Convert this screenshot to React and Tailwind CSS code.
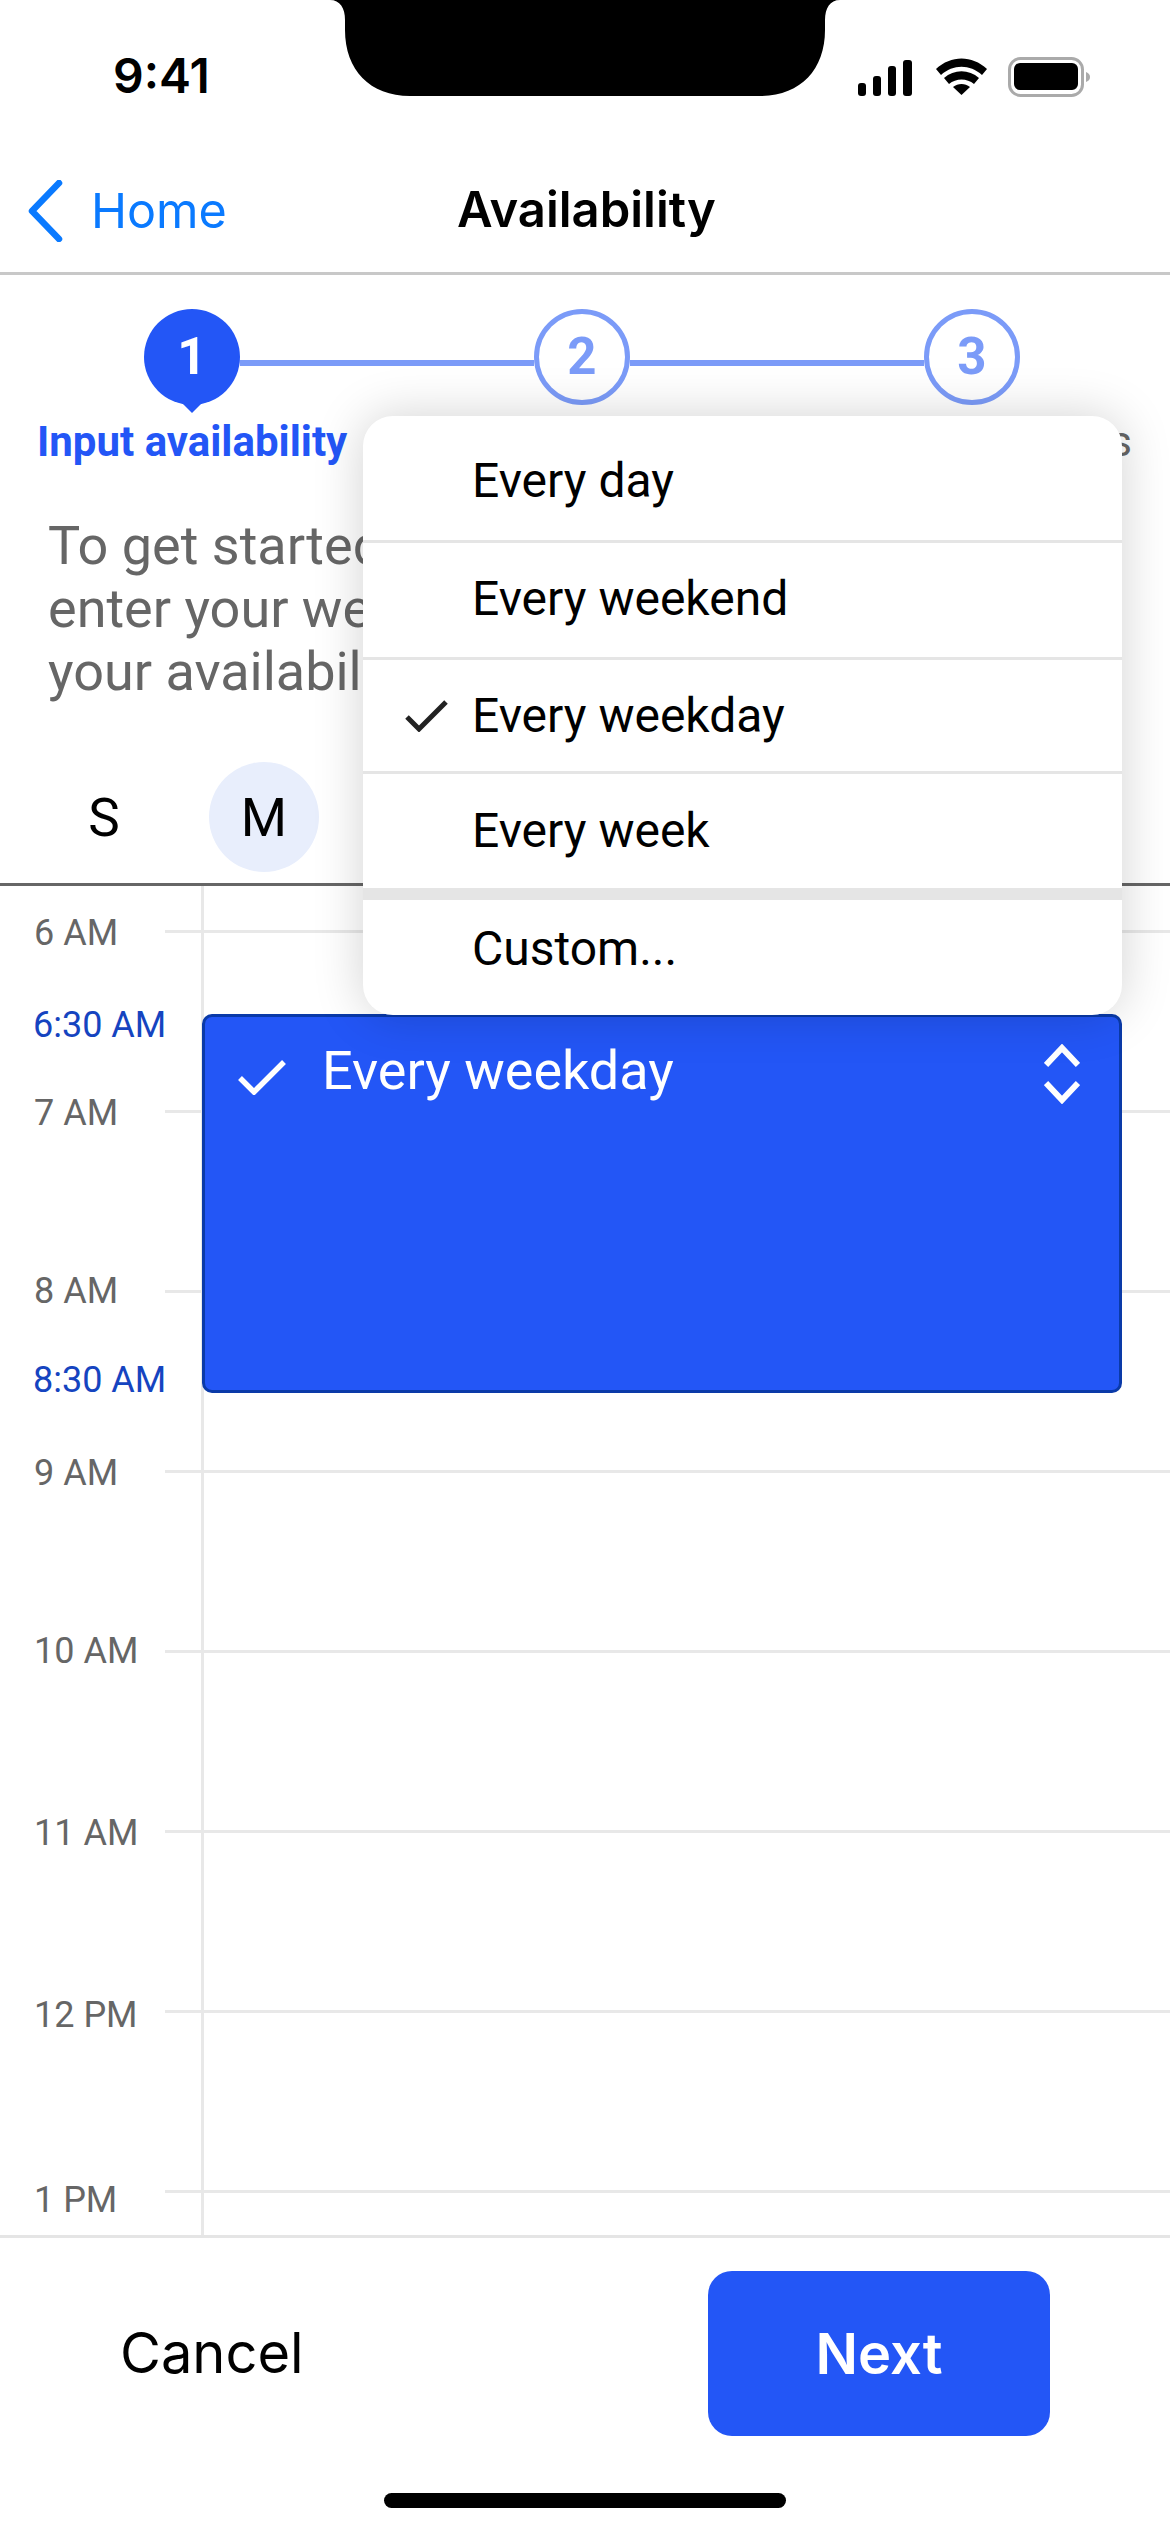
const hours = [
  { t: '6 AM', cls: '-mt-[17px]' },
  { t: '7 AM', cls: '-mt-[17px]' },
  { t: '8 AM', cls: '-mt-[19px]' },
  { t: '9 AM', cls: '-mt-[17px]' },
  { t: '10 AM', cls: '-mt-[19px]' },
  { t: '11 AM', cls: '-mt-[17px]' },
  { t: '12 PM', cls: '-mt-[15px]' },
  { t: '1 PM', cls: '-mt-[10px]' },
];
const days = ['S','M','T','W','T','F','S'];
const menu = [
  { label: 'Every day', cls: 'h-[127px] pt-[6px] border-b-[3px] border-[#e5e5e5]' },
  { label: 'Every weekend', cls: 'h-[117px] pb-[2px] border-b-[3px] border-[#e5e5e5]' },
  { label: 'Every weekday', cls: 'h-[114px] border-b-[3px] border-[#e5e5e5]', checked: true },
  { label: 'Every week', cls: 'h-[126px] border-b-[12px] border-[#e5e5e5]' },
  { label: 'Custom...', cls: 'h-[98px]' },
];

function Step({ n, active }) {
  return active ? (
    <div className="relative w-[96px] h-[96px] shrink-0 rounded-full bg-[#2356f6] flex items-center justify-center text-white font-bold text-[51px]">
      {n}
      <div className="absolute left-[36px] top-[92px] w-0 h-0 border-l-[12px] border-r-[12px] border-t-[12px] border-l-transparent border-r-transparent border-t-[#2356f6]" />
    </div>
  ) : (
    <div className="w-[96px] h-[96px] shrink-0 rounded-full bg-white border-[5px] border-[#7b9bf8] flex items-center justify-center text-[#7b9bf8] font-bold text-[51px]">
      {n}
    </div>
  );
}

export default function App() {
  return (
    <div className="relative w-[1170px] h-[2532px] overflow-hidden bg-white font-['Roboto',sans-serif]">
      {/* status bar */}
      <div className="flex h-[96px] items-start font-['Inter',sans-serif]">
        <div className="w-[330px] pl-[113px] pt-[47px] text-[48px] leading-[58px] font-semibold text-black">9:41</div>
        <svg width="510" height="96" viewBox="0 0 510 96" className="shrink-0">
          <path d="M0 0C10 0 15 8 15 20V30C15 70 40 96 80 96H430C470 96 495 70 495 30V20C495 8 500 0 510 0Z" fill="#000" />
        </svg>
        <svg width="240" height="50" viewBox="0 0 240 50" className="mt-[52px] ml-[10px] shrink-0">
          <rect x="8" y="31" width="8" height="13" rx="3" fill="#000" />
          <rect x="23" y="24" width="8" height="20" rx="3" fill="#000" />
          <rect x="38" y="14" width="8" height="30" rx="3" fill="#000" />
          <rect x="53" y="8" width="9" height="36" rx="3" fill="#000" />
          <path d="M86 17C101 3 122 3 137 17L132 23C120 12 103 12 91 23Z" fill="#000" />
          <path d="M94 26C104 17 119 17 129 26L124 32C117 26 106 26 99 32Z" fill="#000" />
          <path d="M103 35C108 31 115 31 120 35L111.500 43Z" fill="#000" />
          <rect x="159.500" y="6.500" width="73" height="37" rx="11" fill="none" stroke="#aaaaaa" strokeWidth="3" />
          <rect x="164" y="11" width="64" height="27" rx="6" fill="#000" />
          <path d="M236 20C239 21 240 23 240 25C240 27 239 29 236 30Z" fill="#aaaaaa" />
        </svg>
      </div>

      {/* nav bar */}
      <div className="relative flex h-[179px] items-center justify-center border-b-[3px] border-[#c8c8c8] font-['Inter',sans-serif]">
        <div className="absolute left-[27px] top-[84px] flex items-center">
          <svg width="36" height="62" viewBox="0 0 36 62" className="block">
            <path d="M32 3L5 31L32 59" fill="none" stroke="#0a7aff" strokeWidth="6.500" strokeLinecap="round" strokeLinejoin="round" />
          </svg>
          <span className="ml-[28px] text-[48.500px] leading-[60px] text-[#0a7aff]">Home</span>
        </div>
        <span className="mt-[52px] ml-[3px] text-[49px] leading-[60px] font-semibold text-black">Availability</span>
      </div>

      {/* stepper */}
      <div className="flex items-center pl-[144px] pt-[34px]">
        <Step n="1" active />
        <div className="w-[294px] h-[6px] mt-[12px] bg-[#7b9bf8]" />
        <Step n="2" />
        <div className="w-[294px] h-[6px] mt-[12px] bg-[#7b9bf8]" />
        <Step n="3" />
      </div>
      <div className="flex justify-between mt-[13px] pl-[37px] pr-[38px] text-[42px] leading-[48px] font-bold">
        <span className="text-[#2356f6]">Input availability</span>
        <span className="text-[#666666] font-normal">Review results</span>
      </div>

      {/* intro */}
      <p className="mt-[48px] pl-[48px] text-[54px] leading-[63px] text-[#666666]">
        To get started, please<br />enter your weekly schedule<br />your availability
      </p>

      {/* day header */}
      <div className="mt-[59px] flex items-center h-[110px] pl-[24px] text-[53px] text-black">
        {days.map((d, i) => (
          <div key={i} className="w-[160px] shrink-0 flex justify-center">
            <div className={i === 1 ? 'w-[110px] h-[110px] pt-[4px] rounded-full bg-[#e8eefc] flex items-center justify-center' : 'w-[110px] h-[110px] pt-[4px] flex items-center justify-center'}>{d}</div>
          </div>
        ))}
      </div>
      <div className="mt-[11px] h-[3px] bg-[#666666]" />

      {/* time grid */}
      <div className="relative h-[1352px] pt-[44px] overflow-hidden border-b-[3px] border-[#e5e5e5]">
        {hours.map((h) => (
          <div key={h.t} className="flex h-[180px] items-start">
            <span className={`w-[165px] shrink-0 pl-[34px] text-[36px] leading-[40px] text-[#666666] ${h.cls}`}>{h.t}</span>
            <div className="flex-1 h-[3px] bg-[#e8e8e8]" />
          </div>
        ))}
        <div className="absolute left-[201px] top-0 bottom-0 w-[3px] bg-[#e8e8e8]" />
        <span className="absolute left-[33px] top-[119px] text-[36px] leading-[40px] text-[#1544c0]">6:30 AM</span>
        <span className="absolute left-[33px] top-[474px] text-[36px] leading-[40px] text-[#1544c0]">8:30 AM</span>
        <div className="absolute left-[202px] top-[128px] w-[920px] h-[379px] rounded-[10px] bg-[#2356f6] border-[3px] border-[#0a3aa8] flex items-start text-white">
          <svg width="50" height="36" viewBox="0 0 50 36" className="ml-[32px] mt-[42px] shrink-0">
            <path d="M3 19L17 33L47 3" fill="none" stroke="#fff" strokeWidth="5.500" />
          </svg>
          <span className="ml-[35px] mt-[24px] text-[54px] leading-[60px]">Every weekday</span>
          <svg width="36" height="60" viewBox="0 0 36 60" className="absolute left-[839px] top-[27px]">
            <path d="M2 21L18 4L34 21M2 39L18 56L34 39" fill="none" stroke="#fff" strokeWidth="6" />
          </svg>
        </div>
      </div>

      {/* footer */}
      <div className="flex items-center justify-between pt-[33px] pl-[120px] pr-[120px]">
        <span className="mb-[2px] text-[56px] text-black font-['Inter',sans-serif]">Cancel</span>
        <div className="w-[342px] h-[165px] rounded-[24px] bg-[#2356f6] flex items-center justify-center text-white text-[56px] font-semibold font-['Inter',sans-serif]">Next</div>
      </div>
      <div className="mt-[57px] mx-auto w-[402px] h-[15px] rounded-full bg-black" />

      {/* dropdown */}
      <div className="absolute left-[363px] top-[416px] w-[759px] h-[599px] rounded-[30px] bg-white shadow-[0_0_50px_rgba(0,0,0,0.18)] overflow-hidden text-[48px] text-black">
        {menu.map((m) => (
          <div key={m.label} className={`flex items-center ${m.cls}`}>
            <div className="w-[109px] shrink-0 pl-[42px]">
              {m.checked && (
                <svg width="44" height="32" viewBox="0 0 44 32" className="block">
                  <path d="M2 17L14 29L41 2" fill="none" stroke="#222" strokeWidth="5" />
                </svg>
              )}
            </div>
            <span>{m.label}</span>
          </div>
        ))}
      </div>
    </div>
  );
}
